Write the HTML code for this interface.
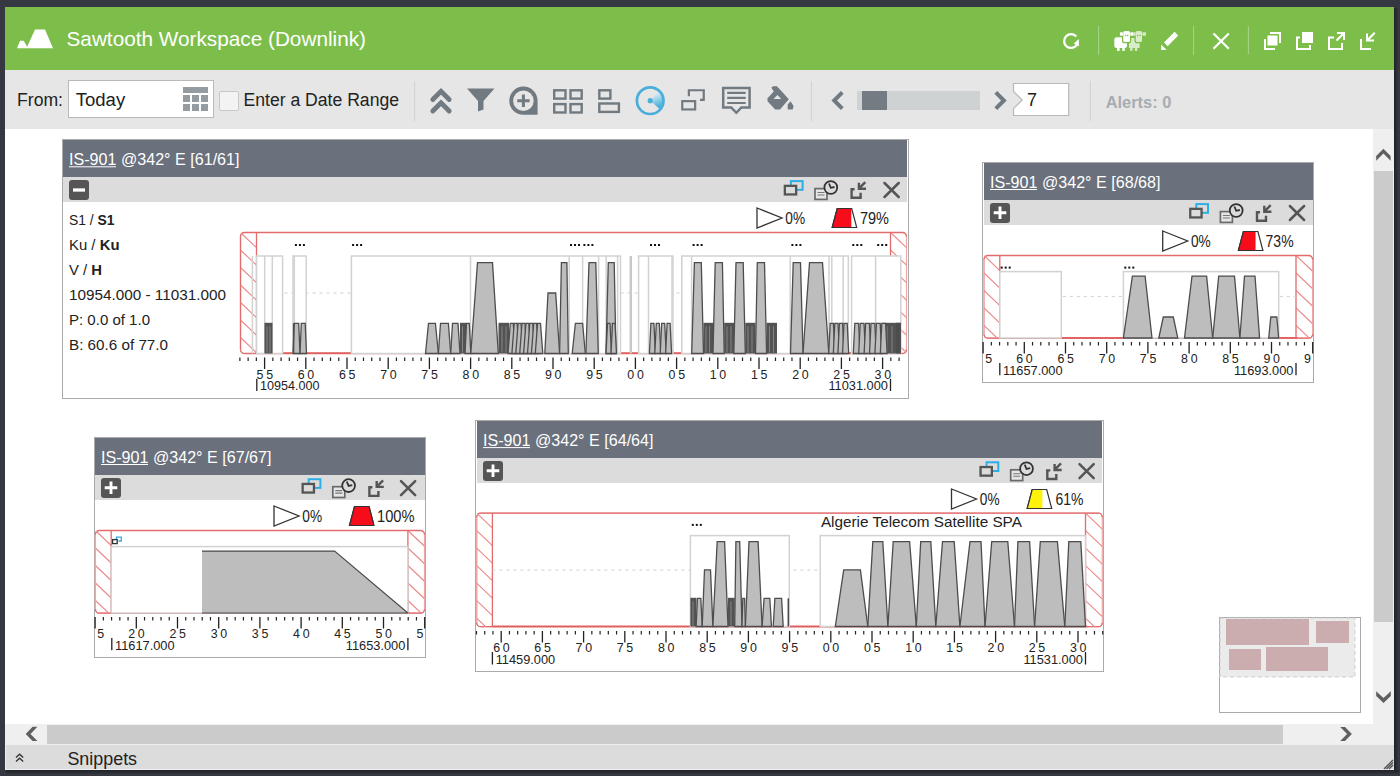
<!DOCTYPE html><html><head><meta charset="utf-8"><style>
html,body{margin:0;padding:0;width:1400px;height:776px;overflow:hidden;background:#353841;font-family:"Liberation Sans",sans-serif;}
.a{position:absolute;box-sizing:border-box;}
svg{position:absolute;left:0;top:0;}
text{font-family:"Liberation Sans",sans-serif;}
</style></head><body>

<div class="a" style="left:5px;top:7px;width:1389px;height:63px;background:#7dbe4b"></div>
<div class="a" style="left:5px;top:70px;width:1389px;height:59px;background:#e6e6e6"></div>
<div class="a" style="left:5px;top:129px;width:1368px;height:595px;background:#fff"></div>
<div class="a" style="left:1373px;top:129px;width:21px;height:595px;background:#efefef"></div>
<div class="a" style="left:1374px;top:171px;width:19px;height:451px;background:#cbcbcb"></div>
<div class="a" style="left:5px;top:724px;width:1389px;height:21px;background:#efefef"></div>
<div class="a" style="left:47px;top:725px;width:1236px;height:19px;background:#cbcbcb"></div>
<div class="a" style="left:1394px;top:8px;width:5px;height:767px;background:linear-gradient(to right,#1f2227,#2a2d33 50%,#393c44)"></div>
<div class="a" style="left:6px;top:770px;width:1393px;height:5px;background:linear-gradient(to bottom,#1f2227,#2a2d33 50%,#393c44)"></div>
<div class="a" style="left:5px;top:745px;width:1389px;height:25px;background:#dcdcdc;border-left:1px solid #f0f0f0;border-bottom:1px solid #f0f0f0"></div>
<div class="a" style="left:68px;top:80px;width:146px;height:38px;background:#fff;border:1.5px solid #b9b9b9"></div>
<div class="a" style="left:219px;top:91px;width:20px;height:20px;background:#f3f3f3;border:1px solid #c8c8c8;border-radius:2px"></div>
<div class="a" style="left:62px;top:139px;width:847px;height:260px;background:#fff;border:1px solid #aaa"></div>
<div class="a" style="left:63px;top:140px;width:844px;height:37px;background:#6a707c"></div>
<div class="a" style="left:63px;top:177px;width:844px;height:24.5px;background:#dcdcdc"></div>
<div class="a" style="left:982px;top:162px;width:332px;height:221px;background:#fff;border:1px solid #aaa"></div>
<div class="a" style="left:984px;top:163px;width:329px;height:37px;background:#6a707c"></div>
<div class="a" style="left:984px;top:200px;width:329px;height:25px;background:#dcdcdc"></div>
<div class="a" style="left:94px;top:437px;width:332px;height:221px;background:#fff;border:1px solid #aaa"></div>
<div class="a" style="left:95px;top:438px;width:330px;height:37px;background:#6a707c"></div>
<div class="a" style="left:95px;top:475px;width:330px;height:25px;background:#dcdcdc"></div>
<div class="a" style="left:475px;top:420px;width:629px;height:252px;background:#fff;border:1px solid #aaa"></div>
<div class="a" style="left:477px;top:421px;width:625px;height:37px;background:#6a707c"></div>
<div class="a" style="left:477px;top:458px;width:625px;height:25px;background:#dcdcdc"></div>
<div class="a" style="left:1219px;top:617px;width:142px;height:96px;background:#fff;border:1px solid #aaa"></div>
<svg width="1400" height="776" viewBox="0 0 1400 776"><polygon points="17,48.2 20.1,40.8 23.7,40.8 27.2,46.8 35,29.6 45,29.6 53,48.2" fill="#fff"/><text x="66.5" y="45.8" font-size="20.4" fill="#fff" font-weight="normal" text-anchor="start" textLength="299.5" lengthAdjust="spacingAndGlyphs" >Sawtooth Workspace (Downlink)</text><path d="M1076.3,36.6 A6.9,6.9 0 1 0 1076.7,45" fill="none" stroke="#fff" stroke-width="2.3"/><polygon points="1073.8,43.4 1078.9,39.1 1078.9,46.4" fill="#fff"/><line x1="1098.6" y1="26" x2="1098.6" y2="55" stroke="#a9d48a" stroke-width="1"/><g fill="#fff"><rect x="1114.3" y="37.2" width="12.7" height="10.8" rx="2.5"/><rect x="1117" y="46" width="2.6" height="4.9"/><rect x="1122.3" y="46" width="2.5" height="4.9"/></g><g fill="#d9ecc9"><path d="M1131,38 h5 v3 h3.6 v7 h-10.6 v-6 h2z"/><rect x="1130.2" y="46" width="2.3" height="4.9"/><rect x="1134.9" y="46" width="2.3" height="4.9"/></g><rect x="1122.6" y="30.3" width="8" height="12.3" rx="2.2" fill="#fff" stroke="#7dbe4b" stroke-width="1.3"/><rect x="1119.9" y="32.3" width="3" height="3.4" fill="#fff"/><rect x="1130.3" y="32.3" width="3" height="3.4" fill="#fff"/><rect x="1135.1" y="30.3" width="7.6" height="12.3" rx="2.2" fill="#d9ecc9" stroke="#7dbe4b" stroke-width="1.3"/><rect x="1133.2" y="32.3" width="2.4" height="3.4" fill="#d9ecc9"/><rect x="1142.5" y="32.3" width="3.4" height="3.4" fill="#d9ecc9"/><circle cx="1125.5" cy="35.5" r="0.8" fill="#7dbe4b"/><circle cx="1127.7" cy="35.5" r="0.8" fill="#7dbe4b"/><circle cx="1137.6" cy="35.5" r="0.8" fill="#7dbe4b"/><circle cx="1140" cy="35.5" r="0.8" fill="#7dbe4b"/><polygon points="1164,42.4 1174.6,31.8 1178.2,35.6 1167.6,46.2" fill="#fff"/><polygon points="1161.2,44.4 1161.2,49.9 1166.7,49.9" fill="#fff"/><line x1="1193.6" y1="26" x2="1193.6" y2="55" stroke="#a9d48a" stroke-width="1"/><path d="M1213.5,33.5 L1228.8,48.8 M1228.8,33.5 L1213.5,48.8" stroke="#fff" stroke-width="2.2"/><line x1="1248.4" y1="26.3" x2="1248.4" y2="54.3" stroke="#a9d48a" stroke-width="1"/><g fill="#fff"><rect x="1267.5" y="35.5" width="10" height="10"/><path d="M1270,32 h11 v11 h-2 v-9 h-9z"/><path d="M1264,39 h2 v9 h9 v2 h-11z"/><rect x="1302" y="32" width="11" height="11"/><path d="M1296,36.5 h4 v2 h-2 v9.5 h11 v-3 h2 v5 h-15z"/><path d="M1328,36.5 h6 v2 h-4 v9.5 h11 v-5 h2 v7 h-15z"/><path d="M1337,32 h8 v8 h-2 v-4.6 l-5.8,5.8 -1.4,-1.4 5.8,-5.8 h-4.6z"/><path d="M1360,39 h2 v9 h9 v2 h-11z"/><path d="M1375.5,33.5 l-6,6 h4.5 v2 h-8 v-8 h2 v4.6 l6,-6z"/></g><text x="17" y="105.5" font-size="18" fill="#222" font-weight="normal" text-anchor="start" textLength="46" lengthAdjust="spacingAndGlyphs" >From:</text><text x="75.7" y="105.5" font-size="18" fill="#222" font-weight="normal" text-anchor="start" textLength="49.5" lengthAdjust="spacingAndGlyphs" >Today</text><g fill="#959ca1"><rect x="183" y="87" width="25" height="6"/><rect x="183" y="95" width="7" height="7"/><rect x="192" y="95" width="7" height="7"/><rect x="201" y="95" width="7" height="7"/><rect x="183" y="104" width="7" height="7"/><rect x="192" y="104" width="7" height="7"/><rect x="201" y="104" width="7" height="7"/></g><text x="243.5" y="105.5" font-size="18" fill="#222" font-weight="normal" text-anchor="start" textLength="155.5" lengthAdjust="spacingAndGlyphs" >Enter a Date Range</text><line x1="414.6" y1="81" x2="414.6" y2="121" stroke="#cfd0d1" stroke-width="1"/><path d="M432.8,99.5 L441,91.3 L449.2,99.5 M432.8,111 L441,102.8 L449.2,111" fill="none" stroke="#717a80" stroke-width="4.8" stroke-linecap="round" stroke-linejoin="miter"/><polygon points="467,88.5 494.5,88.5 483.5,101 483.5,109.5 478,111.5 478,101" fill="#717a80"/><path d="M523.4,86.6 A14.1,14.1 0 1 0 523.4,114.8 L537.6,114.8 L537.6,100.7 A14.1,14.1 0 0 0 523.4,86.6 Z" fill="#717a80"/><circle cx="523.4" cy="100.7" r="10.3" fill="#e6e6e6"/><path d="M523.4,94.5 V106.9 M517.2,100.7 H529.6" stroke="#717a80" stroke-width="3"/><g fill="none" stroke="#717a80" stroke-width="2.4"><rect x="554.2" y="90.3" width="11.3" height="8.3"/><rect x="570.5" y="90.3" width="11.2" height="8.3"/><rect x="554.2" y="104.1" width="11.3" height="8.4"/><rect x="570.5" y="104.1" width="11.2" height="8.4"/></g><g fill="none" stroke="#717a80" stroke-width="2.4"><rect x="599.3" y="90.3" width="11.1" height="8.3"/><rect x="599.3" y="103.5" width="19.6" height="8.4"/></g><defs><linearGradient id="rg" x1="0" y1="0" x2="0.3" y2="1"><stop offset="0.1" stop-color="#eef6fa"/><stop offset="1" stop-color="#4aaedb"/></linearGradient></defs><path d="M650.2,100.7 L658.52,91.78 A12.2,12.2 0 0 1 659.27,108.86 Z" fill="url(#rg)"/><circle cx="650.2" cy="100.7" r="13.3" fill="none" stroke="#4aaedb" stroke-width="2.7"/><circle cx="650.2" cy="100.7" r="2.6" fill="#4aaedb"/><g fill="none" stroke="#717a80" stroke-width="2.2"><rect x="682.25" y="101.15" width="12.9" height="8.3"/><path d="M688.85,96.3 V90.25 H703.75 V99.95 H700"/></g><path d="M723.2,88 H749.6 V107.5 H741.4 L736.3,112.8 L731.2,107.5 H723.2 Z" fill="none" stroke="#717a80" stroke-width="2.5"/><path d="M727.2,92.9 H745.7 M727.2,97.9 H745.7 M727.2,103 H745.7" stroke="#717a80" stroke-width="2.2"/><path d="M771.4,87.8 L773,86.2 L776.9,86.2 L780,89.5 L788.8,99.3 L780,109.6 L775.2,109.6 L767.5,101.3 L767.5,98.2 L773.8,91.4 Z" fill="#717a80"/><polygon points="773.6,98.9 777.4,94.9 781.3,98.9" fill="#e6e6e6"/><path d="M787.7,109.6 L792.7,109.6 L793.6,105.9 L790.5,101.3 L787.7,104.4 Z" fill="#717a80"/><line x1="811.4" y1="81" x2="811.4" y2="121" stroke="#cfd0d1" stroke-width="1"/><path d="M842.3,92.3 L834.2,100.5 L842.3,108.7" fill="none" stroke="#717a80" stroke-width="4"/><rect x="857" y="91" width="123" height="19" fill="#ced2d3"/><rect x="862" y="91" width="25" height="19" fill="#747b82"/><path d="M995.8,92.3 L1003.9,100.5 L995.8,108.7" fill="none" stroke="#717a80" stroke-width="4"/><path d="M1013.5,83.5 H1068.7 V115.5 H1013.5 V108.6 L1022.2,100 L1013.5,91.4 Z" fill="#fff" stroke="#b9b9b9" stroke-width="1.2"/><text x="1027" y="105.7" font-size="18" fill="#222" font-weight="normal" text-anchor="start" >7</text><line x1="1090.3" y1="81" x2="1090.3" y2="121" stroke="#cfd0d1" stroke-width="1"/><text x="1105.7" y="107.9" font-size="16" fill="#a6adb2" font-weight="bold" text-anchor="start" textLength="65.7" lengthAdjust="spacingAndGlyphs" >Alerts: 0</text><text x="69" y="165" font-size="16.5" fill="#fff" textLength="170.5" lengthAdjust="spacingAndGlyphs">IS-901 @342° E [61/61]</text><line x1="69" y1="166.8" x2="116" y2="166.8" stroke="#fff" stroke-width="1"/><rect x="69" y="180" width="20" height="20" rx="3" fill="#555"/><path d="M73,190 h12" stroke="#fff" stroke-width="3.3"/><rect x="790.9" y="181.1" width="11.7" height="8.7" fill="none" stroke="#2eaee6" stroke-width="2"/><rect x="784.85" y="185.85" width="11.3" height="8.6" fill="#dcdcdc" stroke="#555" stroke-width="2.3"/><rect x="815" y="188.6" width="12" height="10.8" fill="#e6e6e6" stroke="#6a6a6a" stroke-width="1.7"/><path d="M817.5,192.5 h7 M817.5,195 h7" stroke="#777" stroke-width="1.1"/><circle cx="830.8" cy="187.5" r="6.4" fill="#dcdcdc" stroke="#333" stroke-width="1.8"/><path d="M829,183.5 L830.8,187.8 L834.5,187" fill="none" stroke="#333" stroke-width="1.8"/><path d="M854.6,189.2 H851.6 V197.8 H860.6 V192.8" fill="none" stroke="#555" stroke-width="2.4"/><path d="M865.3,182.2 L859.3,188.2 M858.9,182.8 V188.8 H866" fill="none" stroke="#555" stroke-width="2.4"/><path d="M884.5,183 L898.7,197 M898.7,183 L884.5,197" stroke="#555" stroke-width="2.5" stroke-linecap="round"/><polygon points="757,208 782,218 757,228" fill="#fff" stroke="#333" stroke-width="1.3"/><text x="785.3" y="224.2" font-size="16.2" fill="#222" font-weight="normal" text-anchor="start" textLength="19.8" lengthAdjust="spacingAndGlyphs" >0%</text><polygon points="832.2,227.5 837.2,208.5 851.7,208.5 856.7,227.5" fill="#fff" stroke="#333" stroke-width="1.2"/><clipPath id="cp832"><rect x="831.2" y="208" width="20.110000000000014" height="21"/></clipPath><polygon clip-path="url(#cp832)" points="832.2,227.5 837.2,208.5 851.7,208.5 856.7,227.5" fill="#f70d1a" stroke="#333" stroke-width="1.2"/><text x="860" y="224.2" font-size="16.2" fill="#222" font-weight="normal" text-anchor="start" textLength="29" lengthAdjust="spacingAndGlyphs" >79%</text><text x="69" y="225.2" font-size="15" fill="#222" textLength="45.5" lengthAdjust="spacingAndGlyphs">S1 / <tspan font-weight="bold">S1</tspan></text><text x="69" y="250.1" font-size="15" fill="#222" textLength="50.5" lengthAdjust="spacingAndGlyphs">Ku / <tspan font-weight="bold">Ku</tspan></text><text x="69" y="275.0" font-size="15" fill="#222" textLength="33" lengthAdjust="spacingAndGlyphs">V / <tspan font-weight="bold">H</tspan></text><text x="69" y="300" font-size="15" fill="#222" font-weight="normal" text-anchor="start" textLength="157" lengthAdjust="spacingAndGlyphs" >10954.000 - 11031.000</text><text x="69" y="324.8" font-size="15" fill="#222" font-weight="normal" text-anchor="start" textLength="81" lengthAdjust="spacingAndGlyphs" >P: 0.0 of 1.0</text><text x="69" y="349.6" font-size="15" fill="#222" font-weight="normal" text-anchor="start" textLength="99" lengthAdjust="spacingAndGlyphs" >B: 60.6 of 77.0</text><rect x="240.5" y="232.5" width="666.0" height="121.0" rx="4" fill="#fff" stroke="#eea8a8" stroke-width="1.2"/><line x1="240.5" y1="236.5" x2="240.5" y2="349.5" stroke="#e26b6b" stroke-width="1.3"/><path d="M240.5,236.5 A4,4 0 0 1 244.5,232.5 H902.5 A4,4 0 0 1 906.5,236.5" fill="none" stroke="#e26b6b" stroke-width="1.3"/><path d="M240.5,349.5 A4,4 0 0 0 244.5,353.5 H902.5 A4,4 0 0 0 906.5,349.5" fill="none" stroke="#e26b6b" stroke-width="1.3"/><line x1="255.5" y1="353.1" x2="891.5" y2="353.1" stroke="#e06060" stroke-width="1.7"/><clipPath id="h1a"><rect x="240.5" y="232.5" width="16.0" height="121.0"/></clipPath><path clip-path="url(#h1a)" d="M240.5,127.5 L256.5,142.7 M240.5,145.0 L256.5,160.2 M240.5,162.5 L256.5,177.7 M240.5,180.0 L256.5,195.2 M240.5,197.5 L256.5,212.7 M240.5,215.0 L256.5,230.2 M240.5,232.5 L256.5,247.7 M240.5,250.0 L256.5,265.2 M240.5,267.5 L256.5,282.7 M240.5,285.0 L256.5,300.2 M240.5,302.5 L256.5,317.7 M240.5,320.0 L256.5,335.2 M240.5,337.5 L256.5,352.7 M240.5,355.0 L256.5,370.2 M240.5,372.5 L256.5,387.7 M240.5,390.0 L256.5,405.2" stroke="#ea8a8a" stroke-width="1.15"/><clipPath id="h1b"><rect x="890.5" y="232.5" width="16.0" height="121.0"/></clipPath><path clip-path="url(#h1b)" d="M890.5,127.5 L906.5,142.7 M890.5,145.0 L906.5,160.2 M890.5,162.5 L906.5,177.7 M890.5,180.0 L906.5,195.2 M890.5,197.5 L906.5,212.7 M890.5,215.0 L906.5,230.2 M890.5,232.5 L906.5,247.7 M890.5,250.0 L906.5,265.2 M890.5,267.5 L906.5,282.7 M890.5,285.0 L906.5,300.2 M890.5,302.5 L906.5,317.7 M890.5,320.0 L906.5,335.2 M890.5,337.5 L906.5,352.7 M890.5,355.0 L906.5,370.2 M890.5,372.5 L906.5,387.7 M890.5,390.0 L906.5,405.2" stroke="#ea8a8a" stroke-width="1.15"/><path d="M256.5,232.5 V353.5 M890.5,232.5 V353.5" stroke="#e26b6b" stroke-width="1.3"/><line x1="256.5" y1="293" x2="890.5" y2="293" stroke="#cfcfcf" stroke-width="1" stroke-dasharray="3,4"/><rect x="256.6" y="256" width="26.0" height="97.5" fill="#fff" stroke="#d2d2d2" stroke-width="1.5"/><rect x="293" y="256" width="13.199999999999989" height="97.5" fill="#fff" stroke="#d2d2d2" stroke-width="1.5"/><rect x="351.4" y="256" width="269.1" height="97.5" fill="#fff" stroke="#d2d2d2" stroke-width="1.5"/><rect x="638.6" y="256" width="34.39999999999998" height="97.5" fill="#fff" stroke="#d2d2d2" stroke-width="1.5"/><rect x="681.8" y="256" width="166.5" height="97.5" fill="#fff" stroke="#d2d2d2" stroke-width="1.5"/><rect x="851.6" y="256" width="49.19999999999993" height="97.5" fill="#fff" stroke="#d2d2d2" stroke-width="1.5"/><path d="M252.4,256 V353.5 M264.7,256 V353.5 M272.3,256 V353.5 M294.3,256 V353.5 M470.5,256 V353.5 M569.2,256 V353.5 M582.6,256 V353.5 M598.6,256 V353.5 M606.2,256 V353.5 M617.6,256 V353.5 M648.5,256 V353.5 M672,256 V353.5 M691.6,256 V353.5 M790.2,256 V353.5 M829,256 V353.5 M831.8,256 V353.5 M843.2,256 V353.5 M875.6,256 V353.5" stroke="#d2d2d2" stroke-width="1.5"/><line x1="630.8" y1="256" x2="630.8" y2="353.5" stroke="#c8c8c8" stroke-width="2.5"/><rect x="264.5" y="322.8" width="8.0" height="30.69999999999999" fill="#535353"/><line x1="267" y1="326.3" x2="267" y2="352.5" stroke="#8a8a8a" stroke-width="0.9"/><line x1="270" y1="326.3" x2="270" y2="352.5" stroke="#8a8a8a" stroke-width="0.9"/><polygon points="293,353.5 294.3,323.3 298.7,323.3 300,353.5" fill="#bdbdbd" stroke="#4d4d4d" stroke-width="1.3"/><polygon points="300,353.5 301.3,323.3 305.2,323.3 306.5,353.5" fill="#bdbdbd" stroke="#4d4d4d" stroke-width="1.3"/><line x1="293.6" y1="323.3" x2="293.6" y2="353.5" stroke="#4d4d4d" stroke-width="1.5"/><polygon points="425.5,353.5 428.5,323.3 435.4,323.3 438.4,353.5" fill="#bdbdbd" stroke="#4d4d4d" stroke-width="1.3"/><polygon points="438.4,353.5 440.5,323.3 448.4,323.3 450.7,353.5" fill="#bdbdbd" stroke="#4d4d4d" stroke-width="1.3"/><polygon points="450.7,353.5 452.5,323.3 458,323.3 460,353.5" fill="#bdbdbd" stroke="#4d4d4d" stroke-width="1.3"/><rect x="460" y="322.8" width="6" height="30.69999999999999" fill="#535353"/><line x1="462.5" y1="326.3" x2="462.5" y2="352.5" stroke="#8a8a8a" stroke-width="0.9"/><polygon points="465,353.5 466.5,323.3 469.3,323.3 470.8,353.5" fill="#bdbdbd" stroke="#4d4d4d" stroke-width="1.3"/><polygon points="470.8,353.5 477.5,262.7 492.5,262.7 498.3,353.5" fill="#bdbdbd" stroke="#4d4d4d" stroke-width="1.3"/><rect x="498.5" y="322.8" width="10.5" height="30.69999999999999" fill="#535353"/><line x1="502" y1="326.3" x2="502" y2="352.5" stroke="#8a8a8a" stroke-width="0.9"/><line x1="506" y1="326.3" x2="506" y2="352.5" stroke="#8a8a8a" stroke-width="0.9"/><polygon points="508,353.5 510.3,323.3 513.2,323.3 515.5,353.5" fill="#bdbdbd" stroke="#4d4d4d" stroke-width="1.3"/><polygon points="511.9,353.5 514.1999999999999,323.3 517.1,323.3 519.4,353.5" fill="#bdbdbd" stroke="#4d4d4d" stroke-width="1.3"/><polygon points="515.8,353.5 518.0999999999999,323.3 521.0,323.3 523.3,353.5" fill="#bdbdbd" stroke="#4d4d4d" stroke-width="1.3"/><polygon points="519.6999999999999,353.5 521.9999999999999,323.3 524.9,323.3 527.1999999999999,353.5" fill="#bdbdbd" stroke="#4d4d4d" stroke-width="1.3"/><polygon points="523.5999999999999,353.5 525.8999999999999,323.3 528.8,323.3 531.0999999999999,353.5" fill="#bdbdbd" stroke="#4d4d4d" stroke-width="1.3"/><polygon points="527.4999999999999,353.5 529.7999999999998,323.3 532.6999999999999,323.3 534.9999999999999,353.5" fill="#bdbdbd" stroke="#4d4d4d" stroke-width="1.3"/><polygon points="531.3999999999999,353.5 533.6999999999998,323.3 536.5999999999999,323.3 538.8999999999999,353.5" fill="#bdbdbd" stroke="#4d4d4d" stroke-width="1.3"/><polygon points="535.2999999999998,353.5 537.5999999999998,323.3 540.4999999999999,323.3 542.7999999999998,353.5" fill="#bdbdbd" stroke="#4d4d4d" stroke-width="1.3"/><polygon points="544.8,353.5 548,293 555.7,293 559.6,353.5" fill="#bdbdbd" stroke="#4d4d4d" stroke-width="1.3"/><polygon points="559.6,353.5 561.4,262.7 566.9,262.7 568.3,353.5" fill="#bdbdbd" stroke="#4d4d4d" stroke-width="1.3"/><polygon points="572.2,353.5 575.4,323.3 582.6,323.3 585.3,353.5" fill="#bdbdbd" stroke="#4d4d4d" stroke-width="1.3"/><polygon points="585.9,353.5 589,262.7 595.8,262.7 598.3,353.5" fill="#bdbdbd" stroke="#4d4d4d" stroke-width="1.3"/><polygon points="606,353.5 608.3,262.7 614.2,262.7 616,353.5" fill="#bdbdbd" stroke="#4d4d4d" stroke-width="1.3"/><polygon points="606,353.5 607.5,323.3 610,323.3 611.5,353.5" fill="#bdbdbd" stroke="#4d4d4d" stroke-width="1.3"/><polygon points="611,353.5 612.5,323.3 615,323.3 616.5,353.5" fill="#bdbdbd" stroke="#4d4d4d" stroke-width="1.3"/><polygon points="649.4,353.5 650.9,323.3 653.9,323.3 655.4,353.5" fill="#bdbdbd" stroke="#4d4d4d" stroke-width="1.3"/><polygon points="654.8,353.5 656.3,323.3 659.3,323.3 660.8,353.5" fill="#bdbdbd" stroke="#4d4d4d" stroke-width="1.3"/><polygon points="660.1999999999999,353.5 661.6999999999999,323.3 664.6999999999999,323.3 666.1999999999999,353.5" fill="#bdbdbd" stroke="#4d4d4d" stroke-width="1.3"/><polygon points="665.5999999999999,353.5 667.0999999999999,323.3 670.0999999999999,323.3 671.5999999999999,353.5" fill="#bdbdbd" stroke="#4d4d4d" stroke-width="1.3"/><rect x="703.5" y="322.8" width="10.0" height="30.69999999999999" fill="#535353"/><line x1="706" y1="326.3" x2="706" y2="352.5" stroke="#8a8a8a" stroke-width="0.9"/><line x1="709.5" y1="326.3" x2="709.5" y2="352.5" stroke="#8a8a8a" stroke-width="0.9"/><rect x="724.2" y="322.8" width="9.799999999999955" height="30.69999999999999" fill="#535353"/><line x1="727" y1="326.3" x2="727" y2="352.5" stroke="#8a8a8a" stroke-width="0.9"/><line x1="731" y1="326.3" x2="731" y2="352.5" stroke="#8a8a8a" stroke-width="0.9"/><rect x="745.3" y="322.8" width="10.200000000000045" height="30.69999999999999" fill="#535353"/><line x1="748" y1="326.3" x2="748" y2="352.5" stroke="#8a8a8a" stroke-width="0.9"/><line x1="752" y1="326.3" x2="752" y2="352.5" stroke="#8a8a8a" stroke-width="0.9"/><rect x="766.6" y="322.8" width="10.399999999999977" height="30.69999999999999" fill="#535353"/><line x1="769.5" y1="326.3" x2="769.5" y2="352.5" stroke="#8a8a8a" stroke-width="0.9"/><line x1="773.5" y1="326.3" x2="773.5" y2="352.5" stroke="#8a8a8a" stroke-width="0.9"/><polygon points="691.7,353.5 694.4,262.7 701.3,262.7 703.5,353.5" fill="#bdbdbd" stroke="#4d4d4d" stroke-width="1.3"/><polygon points="713,353.5 715.2,262.7 722.4,262.7 724.2,353.5" fill="#bdbdbd" stroke="#4d4d4d" stroke-width="1.3"/><polygon points="733.8,353.5 736,262.7 743.2,262.7 745.3,353.5" fill="#bdbdbd" stroke="#4d4d4d" stroke-width="1.3"/><polygon points="755.5,353.5 757.3,262.7 764.5,262.7 766.6,353.5" fill="#bdbdbd" stroke="#4d4d4d" stroke-width="1.3"/><polygon points="790.5,353.5 793.2,262.7 800.5,262.7 803,353.5" fill="#bdbdbd" stroke="#4d4d4d" stroke-width="1.3"/><polygon points="803,353.5 809.5,262.7 822.5,262.7 828.8,353.5" fill="#bdbdbd" stroke="#4d4d4d" stroke-width="1.3"/><polygon points="828.7,353.5 830.2,323.3 833.4000000000001,323.3 834.9000000000001,353.5" fill="#bdbdbd" stroke="#4d4d4d" stroke-width="1.3"/><polygon points="833.3000000000001,353.5 834.8000000000001,323.3 838.0000000000001,323.3 839.5000000000001,353.5" fill="#bdbdbd" stroke="#4d4d4d" stroke-width="1.3"/><polygon points="837.9000000000001,353.5 839.4000000000001,323.3 842.6000000000001,323.3 844.1000000000001,353.5" fill="#bdbdbd" stroke="#4d4d4d" stroke-width="1.3"/><polygon points="842.5000000000001,353.5 844.0000000000001,323.3 847.2000000000002,323.3 848.7000000000002,353.5" fill="#bdbdbd" stroke="#4d4d4d" stroke-width="1.3"/><rect x="882" y="322.8" width="18.799999999999955" height="30.69999999999999" fill="#535353"/><line x1="887" y1="326.3" x2="887" y2="352.5" stroke="#8a8a8a" stroke-width="0.9"/><line x1="892" y1="326.3" x2="892" y2="352.5" stroke="#8a8a8a" stroke-width="0.9"/><polygon points="853.3,353.5 854.8,323.3 858.5999999999999,323.3 860.0999999999999,353.5" fill="#bdbdbd" stroke="#4d4d4d" stroke-width="1.3"/><polygon points="858.6999999999999,353.5 860.1999999999999,323.3 863.9999999999999,323.3 865.4999999999999,353.5" fill="#bdbdbd" stroke="#4d4d4d" stroke-width="1.3"/><polygon points="864.0999999999999,353.5 865.5999999999999,323.3 869.3999999999999,323.3 870.8999999999999,353.5" fill="#bdbdbd" stroke="#4d4d4d" stroke-width="1.3"/><polygon points="869.4999999999999,353.5 870.9999999999999,323.3 874.7999999999998,323.3 876.2999999999998,353.5" fill="#bdbdbd" stroke="#4d4d4d" stroke-width="1.3"/><polygon points="874.8999999999999,353.5 876.3999999999999,323.3 880.1999999999998,323.3 881.6999999999998,353.5" fill="#bdbdbd" stroke="#4d4d4d" stroke-width="1.3"/><polygon points="880.2999999999998,353.5 881.7999999999998,323.3 885.5999999999998,323.3 887.0999999999998,353.5" fill="#bdbdbd" stroke="#4d4d4d" stroke-width="1.3"/><rect x="896" y="322.8" width="4.8" height="30.69999999999999" fill="#4d4d4d"/><rect x="294.90" y="244.00" width="2" height="2" fill="#111"/><rect x="298.90" y="244.00" width="2" height="2" fill="#111"/><rect x="302.90" y="244.00" width="2" height="2" fill="#111"/><rect x="352.10" y="244.00" width="2" height="2" fill="#111"/><rect x="356.10" y="244.00" width="2" height="2" fill="#111"/><rect x="360.10" y="244.00" width="2" height="2" fill="#111"/><rect x="570.00" y="244.00" width="2" height="2" fill="#111"/><rect x="574.00" y="244.00" width="2" height="2" fill="#111"/><rect x="578.00" y="244.00" width="2" height="2" fill="#111"/><rect x="583.40" y="244.00" width="2" height="2" fill="#111"/><rect x="587.40" y="244.00" width="2" height="2" fill="#111"/><rect x="591.40" y="244.00" width="2" height="2" fill="#111"/><rect x="650.00" y="244.00" width="2" height="2" fill="#111"/><rect x="654.00" y="244.00" width="2" height="2" fill="#111"/><rect x="658.00" y="244.00" width="2" height="2" fill="#111"/><rect x="692.60" y="244.00" width="2" height="2" fill="#111"/><rect x="696.60" y="244.00" width="2" height="2" fill="#111"/><rect x="700.60" y="244.00" width="2" height="2" fill="#111"/><rect x="791.40" y="244.00" width="2" height="2" fill="#111"/><rect x="795.40" y="244.00" width="2" height="2" fill="#111"/><rect x="799.40" y="244.00" width="2" height="2" fill="#111"/><rect x="852.30" y="244.00" width="2" height="2" fill="#111"/><rect x="856.30" y="244.00" width="2" height="2" fill="#111"/><rect x="860.30" y="244.00" width="2" height="2" fill="#111"/><rect x="877.20" y="244.00" width="2" height="2" fill="#111"/><rect x="881.20" y="244.00" width="2" height="2" fill="#111"/><rect x="885.20" y="244.00" width="2" height="2" fill="#111"/><path d="M239.88,357.5 V361.1 M248.12,357.5 V361.1 M256.36,357.5 V361.1 M272.84,357.5 V361.1 M281.08,357.5 V361.1 M289.32,357.5 V361.1 M297.56,357.5 V361.1 M314.04,357.5 V361.1 M322.28,357.5 V361.1 M330.52,357.5 V361.1 M338.76,357.5 V361.1 M355.24,357.5 V361.1 M363.48,357.5 V361.1 M371.72,357.5 V361.1 M379.96,357.5 V361.1 M396.44,357.5 V361.1 M404.68,357.5 V361.1 M412.92,357.5 V361.1 M421.16,357.5 V361.1 M437.64,357.5 V361.1 M445.88,357.5 V361.1 M454.12,357.5 V361.1 M462.36,357.5 V361.1 M478.84,357.5 V361.1 M487.08,357.5 V361.1 M495.32,357.5 V361.1 M503.56,357.5 V361.1 M520.04,357.5 V361.1 M528.28,357.5 V361.1 M536.52,357.5 V361.1 M544.76,357.5 V361.1 M561.24,357.5 V361.1 M569.48,357.5 V361.1 M577.72,357.5 V361.1 M585.96,357.5 V361.1 M602.44,357.5 V361.1 M610.68,357.5 V361.1 M618.92,357.5 V361.1 M627.16,357.5 V361.1 M643.64,357.5 V361.1 M651.88,357.5 V361.1 M660.12,357.5 V361.1 M668.36,357.5 V361.1 M684.84,357.5 V361.1 M693.08,357.5 V361.1 M701.32,357.5 V361.1 M709.56,357.5 V361.1 M726.04,357.5 V361.1 M734.28,357.5 V361.1 M742.52,357.5 V361.1 M750.76,357.5 V361.1 M767.24,357.5 V361.1 M775.48,357.5 V361.1 M783.72,357.5 V361.1 M791.96,357.5 V361.1 M808.44,357.5 V361.1 M816.68,357.5 V361.1 M824.92,357.5 V361.1 M833.16,357.5 V361.1 M849.64,357.5 V361.1 M857.88,357.5 V361.1 M866.12,357.5 V361.1 M874.36,357.5 V361.1 M890.84,357.5 V361.1 M899.08,357.5 V361.1" stroke="#222" stroke-width="1.2"/><path d="M264.60,357.5 V369.0 M305.80,357.5 V369.0 M347.00,357.5 V369.0 M388.20,357.5 V369.0 M429.40,357.5 V369.0 M470.60,357.5 V369.0 M511.80,357.5 V369.0 M553.00,357.5 V369.0 M594.20,357.5 V369.0 M635.40,357.5 V369.0 M676.60,357.5 V369.0 M717.80,357.5 V369.0 M759.00,357.5 V369.0 M800.20,357.5 V369.0 M841.40,357.5 V369.0 M882.60,357.5 V369.0" stroke="#222" stroke-width="1.3"/><text x="260.0" y="378.9" font-size="12.4" fill="#222" font-weight="normal" text-anchor="middle" >5</text><text x="269.6" y="378.9" font-size="12.4" fill="#222" font-weight="normal" text-anchor="middle" >5</text><text x="301.2" y="378.9" font-size="12.4" fill="#222" font-weight="normal" text-anchor="middle" >6</text><text x="310.8" y="378.9" font-size="12.4" fill="#222" font-weight="normal" text-anchor="middle" >0</text><text x="342.4" y="378.9" font-size="12.4" fill="#222" font-weight="normal" text-anchor="middle" >6</text><text x="352.0" y="378.9" font-size="12.4" fill="#222" font-weight="normal" text-anchor="middle" >5</text><text x="383.6" y="378.9" font-size="12.4" fill="#222" font-weight="normal" text-anchor="middle" >7</text><text x="393.20000000000005" y="378.9" font-size="12.4" fill="#222" font-weight="normal" text-anchor="middle" >0</text><text x="424.8" y="378.9" font-size="12.4" fill="#222" font-weight="normal" text-anchor="middle" >7</text><text x="434.40000000000003" y="378.9" font-size="12.4" fill="#222" font-weight="normal" text-anchor="middle" >5</text><text x="466.0" y="378.9" font-size="12.4" fill="#222" font-weight="normal" text-anchor="middle" >8</text><text x="475.6" y="378.9" font-size="12.4" fill="#222" font-weight="normal" text-anchor="middle" >0</text><text x="507.20000000000005" y="378.9" font-size="12.4" fill="#222" font-weight="normal" text-anchor="middle" >8</text><text x="516.8000000000001" y="378.9" font-size="12.4" fill="#222" font-weight="normal" text-anchor="middle" >5</text><text x="548.4" y="378.9" font-size="12.4" fill="#222" font-weight="normal" text-anchor="middle" >9</text><text x="558.0" y="378.9" font-size="12.4" fill="#222" font-weight="normal" text-anchor="middle" >0</text><text x="589.6" y="378.9" font-size="12.4" fill="#222" font-weight="normal" text-anchor="middle" >9</text><text x="599.2" y="378.9" font-size="12.4" fill="#222" font-weight="normal" text-anchor="middle" >5</text><text x="630.8000000000001" y="378.9" font-size="12.4" fill="#222" font-weight="normal" text-anchor="middle" >0</text><text x="640.4000000000001" y="378.9" font-size="12.4" fill="#222" font-weight="normal" text-anchor="middle" >0</text><text x="672.0" y="378.9" font-size="12.4" fill="#222" font-weight="normal" text-anchor="middle" >0</text><text x="681.6" y="378.9" font-size="12.4" fill="#222" font-weight="normal" text-anchor="middle" >5</text><text x="713.2" y="378.9" font-size="12.4" fill="#222" font-weight="normal" text-anchor="middle" >1</text><text x="722.8000000000001" y="378.9" font-size="12.4" fill="#222" font-weight="normal" text-anchor="middle" >0</text><text x="754.4" y="378.9" font-size="12.4" fill="#222" font-weight="normal" text-anchor="middle" >1</text><text x="764.0" y="378.9" font-size="12.4" fill="#222" font-weight="normal" text-anchor="middle" >5</text><text x="795.6" y="378.9" font-size="12.4" fill="#222" font-weight="normal" text-anchor="middle" >2</text><text x="805.2" y="378.9" font-size="12.4" fill="#222" font-weight="normal" text-anchor="middle" >0</text><text x="836.8000000000001" y="378.9" font-size="12.4" fill="#222" font-weight="normal" text-anchor="middle" >2</text><text x="846.4000000000001" y="378.9" font-size="12.4" fill="#222" font-weight="normal" text-anchor="middle" >5</text><text x="878.0" y="378.9" font-size="12.4" fill="#222" font-weight="normal" text-anchor="middle" >3</text><text x="887.6" y="378.9" font-size="12.4" fill="#222" font-weight="normal" text-anchor="middle" >0</text><path d="M256.8,378.8 V391.1 M890.5,378.8 V391.1" stroke="#222" stroke-width="1.3"/><text x="260.1" y="390.3" font-size="12.4" fill="#222" font-weight="normal" text-anchor="start" textLength="59.5" lengthAdjust="spacingAndGlyphs" >10954.000</text><text x="887.9" y="390.3" font-size="12.4" fill="#222" font-weight="normal" text-anchor="end" textLength="59.5" lengthAdjust="spacingAndGlyphs" >11031.000</text><text x="990" y="187.7" font-size="16.5" fill="#fff" textLength="170.5" lengthAdjust="spacingAndGlyphs">IS-901 @342° E [68/68]</text><line x1="990" y1="189.5" x2="1037" y2="189.5" stroke="#fff" stroke-width="1"/><rect x="990" y="203" width="20" height="20" rx="3" fill="#555"/><path d="M993.7,212.7 h12.6 M1000,206.4 v12.6" stroke="#fff" stroke-width="2.9"/><rect x="1196.3000000000002" y="204.1" width="11.7" height="8.7" fill="none" stroke="#2eaee6" stroke-width="2"/><rect x="1190.25" y="208.85" width="11.3" height="8.6" fill="#dcdcdc" stroke="#555" stroke-width="2.3"/><rect x="1220.4" y="211.6" width="12" height="10.8" fill="#e6e6e6" stroke="#6a6a6a" stroke-width="1.7"/><path d="M1222.9,215.5 h7 M1222.9,218 h7" stroke="#777" stroke-width="1.1"/><circle cx="1236.2" cy="210.5" r="6.4" fill="#dcdcdc" stroke="#333" stroke-width="1.8"/><path d="M1234.4,206.5 L1236.2,210.8 L1239.9,210" fill="none" stroke="#333" stroke-width="1.8"/><path d="M1260.0,212.2 H1257.0 V220.8 H1266.0 V215.8" fill="none" stroke="#555" stroke-width="2.4"/><path d="M1270.7,205.2 L1264.7,211.2 M1264.3000000000002,205.8 V211.8 H1271.4" fill="none" stroke="#555" stroke-width="2.4"/><path d="M1289.9,206 L1304.1000000000001,220 M1304.1000000000001,206 L1289.9,220" stroke="#555" stroke-width="2.5" stroke-linecap="round"/><polygon points="1162.7,231 1187.7,241 1162.7,251" fill="#fff" stroke="#333" stroke-width="1.3"/><text x="1191.0" y="247.2" font-size="16.2" fill="#222" font-weight="normal" text-anchor="start" textLength="19.8" lengthAdjust="spacingAndGlyphs" >0%</text><polygon points="1238.4,250.5 1243.4,231.5 1257.9,231.5 1262.9,250.5" fill="#fff" stroke="#333" stroke-width="1.2"/><clipPath id="cp1238"><rect x="1237.4" y="231" width="18.15000000000009" height="21"/></clipPath><polygon clip-path="url(#cp1238)" points="1238.4,250.5 1243.4,231.5 1257.9,231.5 1262.9,250.5" fill="#f70d1a" stroke="#333" stroke-width="1.2"/><text x="1265.6" y="247.2" font-size="16.2" fill="#222" font-weight="normal" text-anchor="start" textLength="28" lengthAdjust="spacingAndGlyphs" >73%</text><rect x="984" y="255.5" width="328.5999999999999" height="82.69999999999999" rx="4" fill="#fff" stroke="#eea8a8" stroke-width="1.2"/><line x1="984" y1="259.5" x2="984" y2="334.2" stroke="#eea8a8" stroke-width="1.3"/><path d="M984,259.5 A4,4 0 0 1 988,255.5 H1308.6 A4,4 0 0 1 1312.6,259.5" fill="none" stroke="#e26b6b" stroke-width="1.3"/><path d="M984,334.2 A4,4 0 0 0 988,338.2 H1308.6 A4,4 0 0 0 1312.6,334.2" fill="none" stroke="#e26b6b" stroke-width="1.3"/><line x1="999" y1="337.8" x2="1297.6" y2="337.8" stroke="#e06060" stroke-width="1.7"/><clipPath id="h2a"><rect x="984" y="255.5" width="15.799999999999955" height="82.69999999999999"/></clipPath><path clip-path="url(#h2a)" d="M984,150.5 L999.8,165.50999999999996 M984,168.0 L999.8,183.00999999999996 M984,185.5 L999.8,200.50999999999996 M984,203.0 L999.8,218.00999999999996 M984,220.5 L999.8,235.50999999999996 M984,238.0 L999.8,253.00999999999996 M984,255.5 L999.8,270.50999999999993 M984,273.0 L999.8,288.00999999999993 M984,290.5 L999.8,305.50999999999993 M984,308.0 L999.8,323.00999999999993 M984,325.5 L999.8,340.50999999999993 M984,343.0 L999.8,358.00999999999993 M984,360.5 L999.8,375.50999999999993 M984,378.0 L999.8,393.00999999999993" stroke="#ea8a8a" stroke-width="1.15"/><clipPath id="h2b"><rect x="1296" y="255.5" width="16.59999999999991" height="82.69999999999999"/></clipPath><path clip-path="url(#h2b)" d="M1296,150.5 L1312.6,166.26999999999992 M1296,168.0 L1312.6,183.76999999999992 M1296,185.5 L1312.6,201.26999999999992 M1296,203.0 L1312.6,218.76999999999992 M1296,220.5 L1312.6,236.26999999999992 M1296,238.0 L1312.6,253.76999999999992 M1296,255.5 L1312.6,271.2699999999999 M1296,273.0 L1312.6,288.7699999999999 M1296,290.5 L1312.6,306.2699999999999 M1296,308.0 L1312.6,323.7699999999999 M1296,325.5 L1312.6,341.2699999999999 M1296,343.0 L1312.6,358.7699999999999 M1296,360.5 L1312.6,376.2699999999999 M1296,378.0 L1312.6,393.7699999999999" stroke="#ea8a8a" stroke-width="1.15"/><path d="M999.8,255.5 V338.2 M1296,255.5 V338.2" stroke="#e26b6b" stroke-width="1.3"/><line x1="999.8" y1="296.4" x2="1296" y2="296.4" stroke="#cfcfcf" stroke-width="1" stroke-dasharray="3,4"/><rect x="999.8" y="271.6" width="61.5" height="66.39999999999998" fill="#fff" stroke="#d2d2d2" stroke-width="1.5"/><rect x="1123.4" y="271.6" width="155.29999999999995" height="66.39999999999998" fill="#fff" stroke="#d2d2d2" stroke-width="1.5"/><polygon points="1123.4,338 1132.4,276.1 1145.1,276.1 1152,338" fill="#bdbdbd" stroke="#4d4d4d" stroke-width="1.3"/><polygon points="1158.8,338 1163.3,317 1173.3,317 1177.8,338" fill="#bdbdbd" stroke="#4d4d4d" stroke-width="1.3"/><polygon points="1184.5,338 1192,276.1 1206.6,276.1 1212.7,338" fill="#bdbdbd" stroke="#4d4d4d" stroke-width="1.3"/><polygon points="1212.7,338 1218.7,276.1 1234.5,276.1 1239.9,338" fill="#bdbdbd" stroke="#4d4d4d" stroke-width="1.3"/><polygon points="1239.9,338 1244.5,276.1 1255,276.1 1259.6,338" fill="#bdbdbd" stroke="#4d4d4d" stroke-width="1.3"/><polygon points="1268.7,338 1270.8,317 1276.8,317 1278.7,338" fill="#bdbdbd" stroke="#4d4d4d" stroke-width="1.3"/><rect x="1000.70" y="266.60" width="2" height="2" fill="#111"/><rect x="1004.70" y="266.60" width="2" height="2" fill="#111"/><rect x="1008.70" y="266.60" width="2" height="2" fill="#111"/><rect x="1124.30" y="266.60" width="2" height="2" fill="#111"/><rect x="1128.30" y="266.60" width="2" height="2" fill="#111"/><rect x="1132.30" y="266.60" width="2" height="2" fill="#111"/><path d="M991.34,342 V345.6 M999.58,342 V345.6 M1007.82,342 V345.6 M1016.06,342 V345.6 M1032.54,342 V345.6 M1040.78,342 V345.6 M1049.02,342 V345.6 M1057.26,342 V345.6 M1073.74,342 V345.6 M1081.98,342 V345.6 M1090.22,342 V345.6 M1098.46,342 V345.6 M1114.94,342 V345.6 M1123.18,342 V345.6 M1131.42,342 V345.6 M1139.66,342 V345.6 M1156.14,342 V345.6 M1164.38,342 V345.6 M1172.62,342 V345.6 M1180.86,342 V345.6 M1197.34,342 V345.6 M1205.58,342 V345.6 M1213.82,342 V345.6 M1222.06,342 V345.6 M1238.54,342 V345.6 M1246.78,342 V345.6 M1255.02,342 V345.6 M1263.26,342 V345.6 M1279.74,342 V345.6 M1287.98,342 V345.6 M1296.22,342 V345.6 M1304.46,342 V345.6" stroke="#222" stroke-width="1.2"/><path d="M983.10,342 V353.5 M1024.30,342 V353.5 M1065.50,342 V353.5 M1106.70,342 V353.5 M1147.90,342 V353.5 M1189.10,342 V353.5 M1230.30,342 V353.5 M1271.50,342 V353.5 M1312.70,342 V353.5" stroke="#222" stroke-width="1.3"/><text x="988.6" y="363.3" font-size="12.4" fill="#222" font-weight="normal" text-anchor="middle" >5</text><text x="1019.6999999999999" y="363.3" font-size="12.4" fill="#222" font-weight="normal" text-anchor="middle" >6</text><text x="1029.3" y="363.3" font-size="12.4" fill="#222" font-weight="normal" text-anchor="middle" >0</text><text x="1060.9" y="363.3" font-size="12.4" fill="#222" font-weight="normal" text-anchor="middle" >6</text><text x="1070.5" y="363.3" font-size="12.4" fill="#222" font-weight="normal" text-anchor="middle" >5</text><text x="1102.1000000000001" y="363.3" font-size="12.4" fill="#222" font-weight="normal" text-anchor="middle" >7</text><text x="1111.7" y="363.3" font-size="12.4" fill="#222" font-weight="normal" text-anchor="middle" >0</text><text x="1143.3" y="363.3" font-size="12.4" fill="#222" font-weight="normal" text-anchor="middle" >7</text><text x="1152.8999999999999" y="363.3" font-size="12.4" fill="#222" font-weight="normal" text-anchor="middle" >5</text><text x="1184.5" y="363.3" font-size="12.4" fill="#222" font-weight="normal" text-anchor="middle" >8</text><text x="1194.1" y="363.3" font-size="12.4" fill="#222" font-weight="normal" text-anchor="middle" >0</text><text x="1225.7" y="363.3" font-size="12.4" fill="#222" font-weight="normal" text-anchor="middle" >8</text><text x="1235.3" y="363.3" font-size="12.4" fill="#222" font-weight="normal" text-anchor="middle" >5</text><text x="1266.9" y="363.3" font-size="12.4" fill="#222" font-weight="normal" text-anchor="middle" >9</text><text x="1276.5" y="363.3" font-size="12.4" fill="#222" font-weight="normal" text-anchor="middle" >0</text><text x="1307.5" y="363.3" font-size="12.4" fill="#222" font-weight="normal" text-anchor="middle" >9</text><path d="M999.8,363.0 V375.3 M1296,363.0 V375.3" stroke="#222" stroke-width="1.3"/><text x="1003.0999999999999" y="374.5" font-size="12.4" fill="#222" font-weight="normal" text-anchor="start" textLength="59.5" lengthAdjust="spacingAndGlyphs" >11657.000</text><text x="1293.4" y="374.5" font-size="12.4" fill="#222" font-weight="normal" text-anchor="end" textLength="59.5" lengthAdjust="spacingAndGlyphs" >11693.000</text><text x="101" y="462.7" font-size="16.5" fill="#fff" textLength="170.5" lengthAdjust="spacingAndGlyphs">IS-901 @342° E [67/67]</text><line x1="101" y1="464.5" x2="148" y2="464.5" stroke="#fff" stroke-width="1"/><rect x="101" y="478" width="20" height="20" rx="3" fill="#555"/><path d="M104.7,487.7 h12.6 M111,481.4 v12.6" stroke="#fff" stroke-width="2.9"/><rect x="308.7" y="479.20000000000005" width="11.7" height="8.7" fill="none" stroke="#2eaee6" stroke-width="2"/><rect x="302.65000000000003" y="483.95000000000005" width="11.3" height="8.6" fill="#dcdcdc" stroke="#555" stroke-width="2.3"/><rect x="332.8" y="486.70000000000005" width="12" height="10.8" fill="#e6e6e6" stroke="#6a6a6a" stroke-width="1.7"/><path d="M335.3,490.6 h7 M335.3,493.1 h7" stroke="#777" stroke-width="1.1"/><circle cx="348.6" cy="485.6" r="6.4" fill="#dcdcdc" stroke="#333" stroke-width="1.8"/><path d="M346.8,481.6 L348.6,485.90000000000003 L352.3,485.1" fill="none" stroke="#333" stroke-width="1.8"/><path d="M372.4,487.3 H369.4 V495.90000000000003 H378.4 V490.90000000000003" fill="none" stroke="#555" stroke-width="2.4"/><path d="M383.1,480.3 L377.1,486.3 M376.70000000000005,480.90000000000003 V486.90000000000003 H383.8" fill="none" stroke="#555" stroke-width="2.4"/><path d="M401.0,481.1 L415.2,495.1 M415.2,481.1 L401.0,495.1" stroke="#555" stroke-width="2.5" stroke-linecap="round"/><polygon points="274,506 299,516 274,526" fill="#fff" stroke="#333" stroke-width="1.3"/><text x="302.3" y="522.2" font-size="16.2" fill="#222" font-weight="normal" text-anchor="start" textLength="19.8" lengthAdjust="spacingAndGlyphs" >0%</text><polygon points="349.5,525.5 354.5,506.5 369.0,506.5 374.0,525.5" fill="#fff" stroke="#333" stroke-width="1.2"/><clipPath id="cp349"><rect x="348.5" y="506" width="25.5" height="21"/></clipPath><polygon clip-path="url(#cp349)" points="349.5,525.5 354.5,506.5 369.0,506.5 374.0,525.5" fill="#f70d1a" stroke="#333" stroke-width="1.2"/><text x="377" y="522.2" font-size="16.2" fill="#222" font-weight="normal" text-anchor="start" textLength="37.5" lengthAdjust="spacingAndGlyphs" >100%</text><rect x="95.4" y="530.5" width="329.1" height="82.70000000000005" rx="4" fill="#fff" stroke="#eea8a8" stroke-width="1.2"/><line x1="95.4" y1="534.5" x2="95.4" y2="609.2" stroke="#eea8a8" stroke-width="1.3"/><path d="M95.4,534.5 A4,4 0 0 1 99.4,530.5 H420.5 A4,4 0 0 1 424.5,534.5" fill="none" stroke="#e26b6b" stroke-width="1.3"/><path d="M95.4,609.2 A4,4 0 0 0 99.4,613.2 H420.5 A4,4 0 0 0 424.5,609.2" fill="none" stroke="#e26b6b" stroke-width="1.3"/><line x1="110.4" y1="612.8000000000001" x2="409.5" y2="612.8000000000001" stroke="#e06060" stroke-width="1.7"/><clipPath id="h3a"><rect x="95.4" y="530.5" width="15.799999999999997" height="82.70000000000005"/></clipPath><path clip-path="url(#h3a)" d="M95.4,425.5 L111.2,440.51 M95.4,443.0 L111.2,458.01 M95.4,460.5 L111.2,475.51 M95.4,478.0 L111.2,493.01 M95.4,495.5 L111.2,510.51 M95.4,513.0 L111.2,528.01 M95.4,530.5 L111.2,545.51 M95.4,548.0 L111.2,563.01 M95.4,565.5 L111.2,580.51 M95.4,583.0 L111.2,598.01 M95.4,600.5 L111.2,615.51 M95.4,618.0 L111.2,633.01 M95.4,635.5 L111.2,650.51 M95.4,653.0 L111.2,668.01" stroke="#ea8a8a" stroke-width="1.15"/><clipPath id="h3b"><rect x="407.9" y="530.5" width="16.600000000000023" height="82.70000000000005"/></clipPath><path clip-path="url(#h3b)" d="M407.9,425.5 L424.5,441.27000000000004 M407.9,443.0 L424.5,458.77000000000004 M407.9,460.5 L424.5,476.27000000000004 M407.9,478.0 L424.5,493.77000000000004 M407.9,495.5 L424.5,511.27000000000004 M407.9,513.0 L424.5,528.77 M407.9,530.5 L424.5,546.27 M407.9,548.0 L424.5,563.77 M407.9,565.5 L424.5,581.27 M407.9,583.0 L424.5,598.77 M407.9,600.5 L424.5,616.27 M407.9,618.0 L424.5,633.77 M407.9,635.5 L424.5,651.27 M407.9,653.0 L424.5,668.77" stroke="#ea8a8a" stroke-width="1.15"/><path d="M111.2,530.5 V613.2 M407.9,530.5 V613.2" stroke="#e26b6b" stroke-width="1.3"/><rect x="111.2" y="546.6" width="296.7" height="66.39999999999998" fill="#fff" stroke="#d2d2d2" stroke-width="1.5"/><polygon points="202,613 202,551.1 334.6,551.1 407.9,613" fill="#bdbdbd"/><path d="M202,551.1 H334.6 L407.9,613 M202,613 H407.9" fill="none" stroke="#4a4a4a" stroke-width="1.1"/><g fill="none" stroke-width="1.3"><path d="M116.5,539.3 V537.2 H121.3 V541 H118.5" stroke="#3ba7e0"/><rect x="112.6" y="539.6" width="4.6" height="4" stroke="#333"/></g><path d="M103.34,617 V620.6 M111.58,617 V620.6 M119.82,617 V620.6 M128.06,617 V620.6 M144.54,617 V620.6 M152.78,617 V620.6 M161.02,617 V620.6 M169.26,617 V620.6 M185.74,617 V620.6 M193.98,617 V620.6 M202.22,617 V620.6 M210.46,617 V620.6 M226.94,617 V620.6 M235.18,617 V620.6 M243.42,617 V620.6 M251.66,617 V620.6 M268.14,617 V620.6 M276.38,617 V620.6 M284.62,617 V620.6 M292.86,617 V620.6 M309.34,617 V620.6 M317.58,617 V620.6 M325.82,617 V620.6 M334.06,617 V620.6 M350.54,617 V620.6 M358.78,617 V620.6 M367.02,617 V620.6 M375.26,617 V620.6 M391.74,617 V620.6 M399.98,617 V620.6 M408.22,617 V620.6 M416.46,617 V620.6" stroke="#222" stroke-width="1.2"/><path d="M95.10,617 V628.5 M136.30,617 V628.5 M177.50,617 V628.5 M218.70,617 V628.5 M259.90,617 V628.5 M301.10,617 V628.5 M342.30,617 V628.5 M383.50,617 V628.5 M424.70,617 V628.5" stroke="#222" stroke-width="1.3"/><text x="100.6" y="638.2" font-size="12.4" fill="#222" font-weight="normal" text-anchor="middle" >5</text><text x="131.70000000000002" y="638.2" font-size="12.4" fill="#222" font-weight="normal" text-anchor="middle" >2</text><text x="141.3" y="638.2" font-size="12.4" fill="#222" font-weight="normal" text-anchor="middle" >0</text><text x="172.9" y="638.2" font-size="12.4" fill="#222" font-weight="normal" text-anchor="middle" >2</text><text x="182.5" y="638.2" font-size="12.4" fill="#222" font-weight="normal" text-anchor="middle" >5</text><text x="214.10000000000002" y="638.2" font-size="12.4" fill="#222" font-weight="normal" text-anchor="middle" >3</text><text x="223.70000000000002" y="638.2" font-size="12.4" fill="#222" font-weight="normal" text-anchor="middle" >0</text><text x="255.30000000000004" y="638.2" font-size="12.4" fill="#222" font-weight="normal" text-anchor="middle" >3</text><text x="264.90000000000003" y="638.2" font-size="12.4" fill="#222" font-weight="normal" text-anchor="middle" >5</text><text x="296.5" y="638.2" font-size="12.4" fill="#222" font-weight="normal" text-anchor="middle" >4</text><text x="306.1" y="638.2" font-size="12.4" fill="#222" font-weight="normal" text-anchor="middle" >0</text><text x="337.7" y="638.2" font-size="12.4" fill="#222" font-weight="normal" text-anchor="middle" >4</text><text x="347.3" y="638.2" font-size="12.4" fill="#222" font-weight="normal" text-anchor="middle" >5</text><text x="378.9" y="638.2" font-size="12.4" fill="#222" font-weight="normal" text-anchor="middle" >5</text><text x="388.5" y="638.2" font-size="12.4" fill="#222" font-weight="normal" text-anchor="middle" >0</text><text x="420" y="638.2" font-size="12.4" fill="#222" font-weight="normal" text-anchor="middle" >5</text><path d="M111.8,638.0 V650.3 M407.9,638.0 V650.3" stroke="#222" stroke-width="1.3"/><text x="115.1" y="649.5" font-size="12.4" fill="#222" font-weight="normal" text-anchor="start" textLength="59.5" lengthAdjust="spacingAndGlyphs" >11617.000</text><text x="405.29999999999995" y="649.5" font-size="12.4" fill="#222" font-weight="normal" text-anchor="end" textLength="59.5" lengthAdjust="spacingAndGlyphs" >11653.000</text><text x="483" y="445.8" font-size="16.5" fill="#fff" textLength="170.5" lengthAdjust="spacingAndGlyphs">IS-901 @342° E [64/64]</text><line x1="483" y1="447.6" x2="530" y2="447.6" stroke="#fff" stroke-width="1"/><rect x="483" y="461" width="20" height="20" rx="3" fill="#555"/><path d="M486.7,470.7 h12.6 M493,464.4 v12.6" stroke="#fff" stroke-width="2.9"/><rect x="986.6" y="462.3" width="11.7" height="8.7" fill="none" stroke="#2eaee6" stroke-width="2"/><rect x="980.5500000000001" y="467.05" width="11.3" height="8.6" fill="#dcdcdc" stroke="#555" stroke-width="2.3"/><rect x="1010.7" y="469.8" width="12" height="10.8" fill="#e6e6e6" stroke="#6a6a6a" stroke-width="1.7"/><path d="M1013.2,473.7 h7 M1013.2,476.2 h7" stroke="#777" stroke-width="1.1"/><circle cx="1026.5" cy="468.7" r="6.4" fill="#dcdcdc" stroke="#333" stroke-width="1.8"/><path d="M1024.7,464.7 L1026.5,469.0 L1030.2,468.2" fill="none" stroke="#333" stroke-width="1.8"/><path d="M1050.3,470.4 H1047.3 V479.0 H1056.3 V474.0" fill="none" stroke="#555" stroke-width="2.4"/><path d="M1061.0,463.4 L1055.0,469.4 M1054.6000000000001,464.0 V470.0 H1061.7" fill="none" stroke="#555" stroke-width="2.4"/><path d="M1079.5,464.2 L1093.7,478.2 M1093.7,464.2 L1079.5,478.2" stroke="#555" stroke-width="2.5" stroke-linecap="round"/><polygon points="951.5,489 976.5,499 951.5,509" fill="#fff" stroke="#333" stroke-width="1.3"/><text x="979.8" y="505.2" font-size="16.2" fill="#222" font-weight="normal" text-anchor="start" textLength="19.8" lengthAdjust="spacingAndGlyphs" >0%</text><polygon points="1027.2,508.5 1032.2,489.5 1046.7,489.5 1051.7,508.5" fill="#fff" stroke="#333" stroke-width="1.2"/><clipPath id="cp1027"><rect x="1026.2" y="489" width="16.190000000000055" height="21"/></clipPath><polygon clip-path="url(#cp1027)" points="1027.2,508.5 1032.2,489.5 1046.7,489.5 1051.7,508.5" fill="#fef20a" stroke="#333" stroke-width="1.2"/><text x="1055.4" y="505.2" font-size="16.2" fill="#222" font-weight="normal" text-anchor="start" textLength="28" lengthAdjust="spacingAndGlyphs" >61%</text><rect x="476.7" y="513.2" width="625.5999999999999" height="113.5" rx="4" fill="#fff" stroke="#eea8a8" stroke-width="1.2"/><line x1="476.7" y1="517.2" x2="476.7" y2="622.7" stroke="#eea8a8" stroke-width="1.3"/><path d="M476.7,517.2 A4,4 0 0 1 480.7,513.2 H1098.3 A4,4 0 0 1 1102.3,517.2" fill="none" stroke="#e26b6b" stroke-width="1.3"/><path d="M476.7,622.7 A4,4 0 0 0 480.7,626.7 H1098.3 A4,4 0 0 0 1102.3,622.7" fill="none" stroke="#e26b6b" stroke-width="1.3"/><line x1="491.7" y1="626.3000000000001" x2="1087.3" y2="626.3000000000001" stroke="#e06060" stroke-width="1.7"/><clipPath id="h4a"><rect x="476.7" y="513.2" width="15.699999999999989" height="113.5"/></clipPath><path clip-path="url(#h4a)" d="M476.7,408.20000000000005 L492.4,423.115 M476.7,425.70000000000005 L492.4,440.615 M476.7,443.20000000000005 L492.4,458.115 M476.7,460.70000000000005 L492.4,475.615 M476.7,478.20000000000005 L492.4,493.115 M476.7,495.70000000000005 L492.4,510.615 M476.7,513.2 L492.4,528.115 M476.7,530.7 L492.4,545.615 M476.7,548.2 L492.4,563.115 M476.7,565.7 L492.4,580.615 M476.7,583.2 L492.4,598.115 M476.7,600.7 L492.4,615.615 M476.7,618.2 L492.4,633.115 M476.7,635.7 L492.4,650.615 M476.7,653.2 L492.4,668.115" stroke="#ea8a8a" stroke-width="1.15"/><clipPath id="h4b"><rect x="1085.5" y="513.2" width="16.799999999999955" height="113.5"/></clipPath><path clip-path="url(#h4b)" d="M1085.5,408.20000000000005 L1102.3,424.16 M1085.5,425.70000000000005 L1102.3,441.66 M1085.5,443.20000000000005 L1102.3,459.16 M1085.5,460.70000000000005 L1102.3,476.66 M1085.5,478.20000000000005 L1102.3,494.16 M1085.5,495.70000000000005 L1102.3,511.66 M1085.5,513.2 L1102.3,529.16 M1085.5,530.7 L1102.3,546.66 M1085.5,548.2 L1102.3,564.16 M1085.5,565.7 L1102.3,581.66 M1085.5,583.2 L1102.3,599.16 M1085.5,600.7 L1102.3,616.66 M1085.5,618.2 L1102.3,634.16 M1085.5,635.7 L1102.3,651.66 M1085.5,653.2 L1102.3,669.16" stroke="#ea8a8a" stroke-width="1.15"/><path d="M492.4,513.2 V626.7 M1085.5,513.2 V626.7" stroke="#e26b6b" stroke-width="1.3"/><line x1="492.4" y1="570.1" x2="1085.5" y2="570.1" stroke="#cfcfcf" stroke-width="1" stroke-dasharray="3,4"/><rect x="690.4" y="535.6" width="98.89999999999998" height="90.89999999999998" fill="#fff" stroke="#d2d2d2" stroke-width="1.5"/><rect x="820.2" y="535.6" width="265.29999999999995" height="90.89999999999998" fill="#fff" stroke="#d2d2d2" stroke-width="1.5"/><rect x="690.4" y="597.8" width="6.100000000000023" height="28.700000000000045" fill="#535353"/><line x1="693" y1="601.3" x2="693" y2="625.5" stroke="#8a8a8a" stroke-width="0.9"/><polygon points="696.1,626.5 697.5,598.3 700.8,598.3 702.2,626.5" fill="#bdbdbd" stroke="#4d4d4d" stroke-width="1.3"/><polygon points="702.2,626.5 704.5,569.8 710.5,569.8 712.9,626.5" fill="#bdbdbd" stroke="#4d4d4d" stroke-width="1.3"/><polygon points="712.9,626.5 717.2,541.6 724.6,541.6 728,626.5" fill="#bdbdbd" stroke="#4d4d4d" stroke-width="1.3"/><rect x="728" y="597.8" width="6.7000000000000455" height="28.700000000000045" fill="#535353"/><line x1="731" y1="601.3" x2="731" y2="625.5" stroke="#8a8a8a" stroke-width="0.9"/><polygon points="734.7,626.5 735.9,541.6 739.7,541.6 742,626.5" fill="#bdbdbd" stroke="#4d4d4d" stroke-width="1.3"/><polygon points="742,626.5 742.8,598.3 744.6,598.3 745.4,626.5" fill="#bdbdbd" stroke="#4d4d4d" stroke-width="1.3"/><polygon points="745.4,626.5 749,541.6 758.1,541.6 762.1,626.5" fill="#bdbdbd" stroke="#4d4d4d" stroke-width="1.3"/><polygon points="762.1,626.5 764.1,598.3 769.8,598.3 771.5,626.5" fill="#bdbdbd" stroke="#4d4d4d" stroke-width="1.3"/><polygon points="773.2,626.5 774.9,598.3 781.6,598.3 783.2,626.5" fill="#bdbdbd" stroke="#4d4d4d" stroke-width="1.3"/><line x1="788.3" y1="598.3" x2="788.3" y2="626.5" stroke="#4a4a4a" stroke-width="1.5"/><polygon points="835.3,626.5 843.7,569.8 860.4,569.8 867.8,626.5" fill="#bdbdbd" stroke="#4d4d4d" stroke-width="1.3"/><polygon points="867.8,626.5 872.8,541.6 882.8,541.6 887.9,626.5" fill="#bdbdbd" stroke="#4d4d4d" stroke-width="1.3"/><polygon points="887.9,626.5 893.2,541.6 909.6,541.6 916.3,626.5" fill="#bdbdbd" stroke="#4d4d4d" stroke-width="1.3"/><polygon points="916.3,626.5 920.7,541.6 930.8,541.6 935.8,626.5" fill="#bdbdbd" stroke="#4d4d4d" stroke-width="1.3"/><polygon points="935.8,626.5 942.5,541.6 954.2,541.6 959.9,626.5" fill="#bdbdbd" stroke="#4d4d4d" stroke-width="1.3"/><polygon points="959.9,626.5 970,541.6 981,541.6 985,626.5" fill="#bdbdbd" stroke="#4d4d4d" stroke-width="1.3"/><polygon points="985,626.5 991.7,541.6 1007.8,541.6 1014.5,626.5" fill="#bdbdbd" stroke="#4d4d4d" stroke-width="1.3"/><polygon points="1014.5,626.5 1017.9,541.6 1029.6,541.6 1034.6,626.5" fill="#bdbdbd" stroke="#4d4d4d" stroke-width="1.3"/><polygon points="1034.6,626.5 1040.3,541.6 1057.4,541.6 1064.8,626.5" fill="#bdbdbd" stroke="#4d4d4d" stroke-width="1.3"/><polygon points="1064.8,626.5 1068.8,541.6 1080.8,541.6 1085.5,626.5" fill="#bdbdbd" stroke="#4d4d4d" stroke-width="1.3"/><rect x="691.80" y="523.90" width="2" height="2" fill="#111"/><rect x="695.80" y="523.90" width="2" height="2" fill="#111"/><rect x="699.80" y="523.90" width="2" height="2" fill="#111"/><text x="820.9" y="526.8" font-size="15" fill="#222" font-weight="normal" text-anchor="start" textLength="201" lengthAdjust="spacingAndGlyphs" >Algerie Telecom Satellite SPA</text><path d="M476.48,631 V634.6 M484.72,631 V634.6 M492.96,631 V634.6 M509.44,631 V634.6 M517.68,631 V634.6 M525.92,631 V634.6 M534.16,631 V634.6 M550.64,631 V634.6 M558.88,631 V634.6 M567.12,631 V634.6 M575.36,631 V634.6 M591.84,631 V634.6 M600.08,631 V634.6 M608.32,631 V634.6 M616.56,631 V634.6 M633.04,631 V634.6 M641.28,631 V634.6 M649.52,631 V634.6 M657.76,631 V634.6 M674.24,631 V634.6 M682.48,631 V634.6 M690.72,631 V634.6 M698.96,631 V634.6 M715.44,631 V634.6 M723.68,631 V634.6 M731.92,631 V634.6 M740.16,631 V634.6 M756.64,631 V634.6 M764.88,631 V634.6 M773.12,631 V634.6 M781.36,631 V634.6 M797.84,631 V634.6 M806.08,631 V634.6 M814.32,631 V634.6 M822.56,631 V634.6 M839.04,631 V634.6 M847.28,631 V634.6 M855.52,631 V634.6 M863.76,631 V634.6 M880.24,631 V634.6 M888.48,631 V634.6 M896.72,631 V634.6 M904.96,631 V634.6 M921.44,631 V634.6 M929.68,631 V634.6 M937.92,631 V634.6 M946.16,631 V634.6 M962.64,631 V634.6 M970.88,631 V634.6 M979.12,631 V634.6 M987.36,631 V634.6 M1003.84,631 V634.6 M1012.08,631 V634.6 M1020.32,631 V634.6 M1028.56,631 V634.6 M1045.04,631 V634.6 M1053.28,631 V634.6 M1061.52,631 V634.6 M1069.76,631 V634.6 M1086.24,631 V634.6 M1094.48,631 V634.6 M1102.72,631 V634.6" stroke="#222" stroke-width="1.2"/><path d="M501.20,631 V642.5 M542.40,631 V642.5 M583.60,631 V642.5 M624.80,631 V642.5 M666.00,631 V642.5 M707.20,631 V642.5 M748.40,631 V642.5 M789.60,631 V642.5 M830.80,631 V642.5 M872.00,631 V642.5 M913.20,631 V642.5 M954.40,631 V642.5 M995.60,631 V642.5 M1036.80,631 V642.5 M1078.00,631 V642.5" stroke="#222" stroke-width="1.3"/><text x="496.59999999999997" y="652" font-size="12.4" fill="#222" font-weight="normal" text-anchor="middle" >6</text><text x="506.2" y="652" font-size="12.4" fill="#222" font-weight="normal" text-anchor="middle" >0</text><text x="537.8" y="652" font-size="12.4" fill="#222" font-weight="normal" text-anchor="middle" >6</text><text x="547.4" y="652" font-size="12.4" fill="#222" font-weight="normal" text-anchor="middle" >5</text><text x="579.0" y="652" font-size="12.4" fill="#222" font-weight="normal" text-anchor="middle" >7</text><text x="588.6" y="652" font-size="12.4" fill="#222" font-weight="normal" text-anchor="middle" >0</text><text x="620.1999999999999" y="652" font-size="12.4" fill="#222" font-weight="normal" text-anchor="middle" >7</text><text x="629.8" y="652" font-size="12.4" fill="#222" font-weight="normal" text-anchor="middle" >5</text><text x="661.4" y="652" font-size="12.4" fill="#222" font-weight="normal" text-anchor="middle" >8</text><text x="671.0" y="652" font-size="12.4" fill="#222" font-weight="normal" text-anchor="middle" >0</text><text x="702.6" y="652" font-size="12.4" fill="#222" font-weight="normal" text-anchor="middle" >8</text><text x="712.2" y="652" font-size="12.4" fill="#222" font-weight="normal" text-anchor="middle" >5</text><text x="743.8" y="652" font-size="12.4" fill="#222" font-weight="normal" text-anchor="middle" >9</text><text x="753.4" y="652" font-size="12.4" fill="#222" font-weight="normal" text-anchor="middle" >0</text><text x="785.0" y="652" font-size="12.4" fill="#222" font-weight="normal" text-anchor="middle" >9</text><text x="794.6" y="652" font-size="12.4" fill="#222" font-weight="normal" text-anchor="middle" >5</text><text x="826.1999999999999" y="652" font-size="12.4" fill="#222" font-weight="normal" text-anchor="middle" >0</text><text x="835.8" y="652" font-size="12.4" fill="#222" font-weight="normal" text-anchor="middle" >0</text><text x="867.4" y="652" font-size="12.4" fill="#222" font-weight="normal" text-anchor="middle" >0</text><text x="877.0" y="652" font-size="12.4" fill="#222" font-weight="normal" text-anchor="middle" >5</text><text x="908.6" y="652" font-size="12.4" fill="#222" font-weight="normal" text-anchor="middle" >1</text><text x="918.2" y="652" font-size="12.4" fill="#222" font-weight="normal" text-anchor="middle" >0</text><text x="949.8000000000001" y="652" font-size="12.4" fill="#222" font-weight="normal" text-anchor="middle" >1</text><text x="959.4000000000001" y="652" font-size="12.4" fill="#222" font-weight="normal" text-anchor="middle" >5</text><text x="991.0" y="652" font-size="12.4" fill="#222" font-weight="normal" text-anchor="middle" >2</text><text x="1000.6" y="652" font-size="12.4" fill="#222" font-weight="normal" text-anchor="middle" >0</text><text x="1032.2" y="652" font-size="12.4" fill="#222" font-weight="normal" text-anchor="middle" >2</text><text x="1041.8" y="652" font-size="12.4" fill="#222" font-weight="normal" text-anchor="middle" >5</text><text x="1073.4" y="652" font-size="12.4" fill="#222" font-weight="normal" text-anchor="middle" >3</text><text x="1083.0" y="652" font-size="12.4" fill="#222" font-weight="normal" text-anchor="middle" >0</text><path d="M492.4,652.1 V664.4 M1085.5,652.1 V664.4" stroke="#222" stroke-width="1.3"/><text x="495.7" y="663.6" font-size="12.4" fill="#222" font-weight="normal" text-anchor="start" textLength="59.5" lengthAdjust="spacingAndGlyphs" >11459.000</text><text x="1082.9" y="663.6" font-size="12.4" fill="#222" font-weight="normal" text-anchor="end" textLength="59.5" lengthAdjust="spacingAndGlyphs" >11531.000</text><rect x="1220" y="618" width="135" height="59" fill="#ebebeb" stroke="#cfcfcf" stroke-width="1" stroke-dasharray="4,3"/><g fill="#cbadaf"><rect x="1226" y="619" width="83" height="26"/><rect x="1316" y="621" width="33" height="22"/><rect x="1229" y="649" width="32" height="21"/><rect x="1266" y="647" width="62" height="24"/></g><path d="M1376.2,160.8 V156 L1383.4,148.8 L1390.6,156 V160.8 L1383.4,153.6 Z" fill="#5f5f5f"/><path d="M1376.2,691.2 V696 L1383.5,702.9 L1390.8,696 V691.2 L1383.5,698.1 Z" fill="#5f5f5f"/><path d="M37.4,726.7 H32.6 L25.7,733.9 L32.6,741 H37.4 L30.5,733.9 Z" fill="#5f5f5f"/><path d="M1340.2,727 H1345 L1351.9,734 L1345,741 H1340.2 L1347.1,734 Z" fill="#5f5f5f"/><path d="M16,757.5 L19.6,754.2 L23.2,757.5 M16,761.5 L19.6,758.2 L23.2,761.5" fill="none" stroke="#333" stroke-width="1.3"/><text x="67.4" y="764.6" font-size="18" fill="#222" font-weight="normal" text-anchor="start" textLength="69.7" lengthAdjust="spacingAndGlyphs" >Snippets</text><path d="M1384,769 L1393,760 M1386.5,769 L1393,762.5 M1389,769 L1393,765" stroke="#555" stroke-width="1.4"/></svg>
</body></html>
